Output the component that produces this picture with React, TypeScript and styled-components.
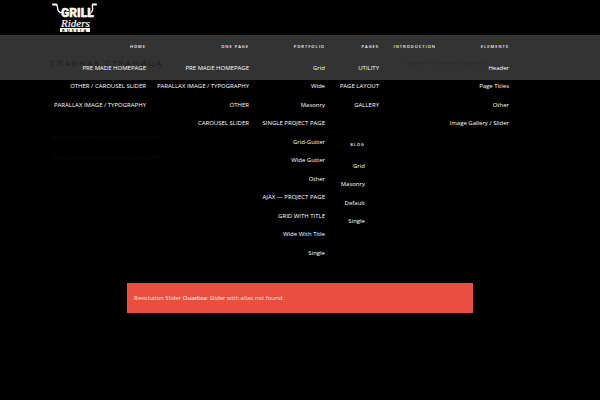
import React from "react";
import styled, { createGlobalStyle } from "styled-components";

const Global = createGlobalStyle`
  * { box-sizing: border-box; }
  body {
    margin: 0;
    background: #000;
    color: #fff;
    font: 6px/18px "Open Sans", sans-serif;
  }
  a { color: inherit; text-decoration: none; }
`;
const Page = styled.div`
  min-height: 100vh;
  background: #000;
`;
const Header = styled.header`
  height: 35px;
  padding: 0 50px;
`;
const Logo = styled.a`
  display: block;
  width: 50px;
  height: 35px;
`;
const Hero = styled.section`
  position: relative;
  height: 45px;
  background: #333;
  padding: 18px 115px 0 51px;
  display: flex;
  justify-content: space-between;
  align-items: flex-start;
`;
const Title = styled.h1`
  margin: 0;
  font-size: 8px;
  line-height: 20px;
  font-weight: 400;
  letter-spacing: 2px;
  color: #1c1c1c;
`;
const Crumbs = styled.nav`
  line-height: 20px;
  color: #2b2b2b;
`;
const Menu = styled.nav`
  position: absolute;
  top: 0;
  left: 59px;
  right: 91px;
  display: grid;
  grid-template-columns: 87fr 86fr 59fr 37fr 40fr 56fr;
  column-gap: 17px;
  align-items: start;
`;
const Column = styled.div`
  min-width: 0;
`;
const Group = styled.div<{ $inset?: boolean }>`
  display: flex;
  flex-direction: column;
  align-items: flex-end;
  padding-right: ${(p) => (p.$inset ? 14 : 0)}px;
  & + & { margin-top: 19px; }
`;
const Heading = styled.a`
  height: 24px;
  font-size: 4px;
  font-weight: 600;
  line-height: 23px;
  letter-spacing: 1px;
  white-space: nowrap;
`;
const List = styled.ul`
  list-style: none;
  margin: 0;
  padding: 0;
  display: flex;
  flex-direction: column;
  align-items: flex-end;
`;
const Item = styled.li`
  line-height: 18px;
  white-space: nowrap;
  &:nth-child(even) { line-height: 19px; }
`;
const Body = styled.div`
  padding: 48px 51px 115px;
  color: #0c0c0c;
`;
const Para = styled.p`
  margin: 0 0 2px;
`;
const Alert = styled.div`
  margin: 0 127px;
  padding: 6px 7px;
  background: #e94f3f;
  color: #fce0dc;
`;
const Strong = styled.span`
  color: #fff;
`;

type Section = { title: string; items: string[]; inset?: boolean };
const columns: Section[][] = [
  [{ title: "HOME", items: ["PRE MADE HOMEPAGE", "OTHER / CAROUSEL SLIDER", "PARALLAX IMAGE / TYPOGRAPHY"] }],
  [{ title: "ONE PAGE", items: ["PRE MADE HOMEPAGE", "PARALLAX IMAGE / TYPOGRAPHY", "OTHER", "CAROUSEL SLIDER"] }],
  [{ title: "PORTFOLIO", items: ["Grid", "Wide", "Masonry", "SINGLE PROJECT PAGE", "Grid-Gutter", "Wide Gutter", "Other", "AJAX — PROJECT PAGE", "GRID WITH TITLE", "Wide With Title", "Single"] }],
  [
    { title: "PAGES", items: ["UTILITY", "PAGE LAYOUT", "GALLERY"] },
    { title: "BLOG", items: ["Grid", "Masonry", "Default", "Single"], inset: true },
  ],
  [{ title: "INTRODUCTION", items: [] }],
  [{ title: "ELEMENTS", items: ["Header", "Page Titles", "Other", "Image Gallery / Slider"] }],
];

export default function App() {
  return (
    <Page>
      <Global />
      <Header>
        <Logo href="#" aria-label="Grill Riders Russia">
          <svg width="50" height="35" viewBox="0 0 50 35" fill="#fff">
            <g fill="none" stroke="#fff" strokeLinecap="round">
              <path d="M3 4.500h3" strokeWidth="2" />
              <path d="M6 4.500c2 0 1 3 2 5.500s3 3 4 2.500" strokeWidth="1.300" />
              <path d="M46 4.500h-3" strokeWidth="2" />
              <path d="M43 4.500c-2 0 1 4-1 7s-2 2-3 2" strokeWidth="1.300" />
            </g>
            <text x="11" y="17" fontFamily="Roboto, sans-serif" fontWeight="900" fontSize="12" stroke="#fff" strokeWidth="0.400">GRILL</text>
            <text x="11" y="27" fontFamily="Liberation Serif, serif" fontStyle="italic" fontWeight="400" fontSize="11" stroke="#fff" strokeWidth="0.200">Riders</text>
            <rect x="10" y="28" width="30" height="4" />
            <text x="12" y="32" fontFamily="Open Sans, sans-serif" fontWeight="700" fontSize="4" fill="#000" letterSpacing="2">RUSSIA</text>
          </svg>
        </Logo>
      </Header>
      <Hero>
        <Title>ГЛАВНАЯ СТРАНИЦА</Title>
        <Crumbs>Главная / Главная страница</Crumbs>
        <Menu>
          {columns.map((groups) => (
            <Column key={groups[0].title}>
              {groups.map((g) => (
                <Group key={g.title} $inset={g.inset}>
                  <Heading href="#">{g.title}</Heading>
                  <List>
                    {g.items.map((i) => (
                      <Item key={i}><a href="#">{i}</a></Item>
                    ))}
                  </List>
                </Group>
              ))}
            </Column>
          ))}
        </Menu>
      </Hero>
      <Body>
        <Para>Добро пожаловать на сайт Grill Riders</Para>
        <Para>Здесь открывается дорога для друзей</Para>
      </Body>
      <Alert role="alert">
        Revolution Slider <Strong>Ошибка</Strong>: Slider with alias not found.
      </Alert>
    </Page>
  );
}
